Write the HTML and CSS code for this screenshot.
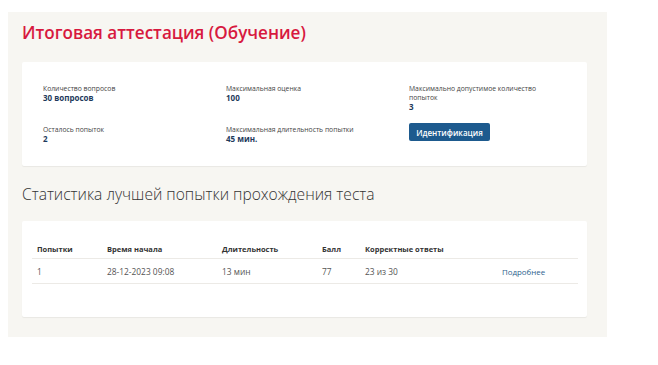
FILE: index.html
```html
<!DOCTYPE html>
<html lang="ru">
<head>
  <meta charset="UTF-8">
  <meta name="viewport" content="width=device-width, initial-scale=1.0">
  <title>Итоговая аттестация</title>
  <link rel="stylesheet" href="styles.css">
</head>
<body>
  <div class="panel">
    <h1 class="title">Итоговая аттестация (Обучение)</h1>

    <div class="card info">
      <div class="info-item">
        <div class="label">Количество вопросов</div>
        <div class="value">30 вопросов</div>
      </div>
      <div class="info-item">
        <div class="label">Максимальная оценка</div>
        <div class="value">100</div>
      </div>
      <div class="info-item narrow">
        <div class="label">Максимально допустимое количество попыток</div>
        <div class="value">3</div>
      </div>
      <div class="info-item">
        <div class="label">Осталось попыток</div>
        <div class="value">2</div>
      </div>
      <div class="info-item">
        <div class="label">Максимальная длительность попытки</div>
        <div class="value">45 мин.</div>
      </div>
      <div class="info-item">
        <button class="btn">Идентификация</button>
      </div>
    </div>

    <h2 class="subtitle">Статистика лучшей попытки прохождения теста</h2>

    <div class="card stats">
      <table class="results">
        <thead>
          <tr>
            <th class="c1">Попытки</th>
            <th class="c2">Время начала</th>
            <th class="c3">Длительность</th>
            <th class="c4">Балл</th>
            <th class="c5">Корректные ответы</th>
            <th></th>
          </tr>
        </thead>
        <tbody>
          <tr>
            <td>1</td>
            <td>28-12-2023 09:08</td>
            <td>13 мин</td>
            <td>77</td>
            <td>23 из 30</td>
            <td><a href="#">Подробнее</a></td>
          </tr>
        </tbody>
      </table>
    </div>
  </div>
</body>
</html>
```

FILE: styles.css
```css
body {
  margin: 0;
  padding: 12px 0 0 8px;
  background: #fff;
  font-family: "Open Sans", "Liberation Sans", sans-serif;
  color: #333;
}
.panel {
  width: 599px;
  height: 325px;
  padding: 0 20px 0 14px;
  box-sizing: border-box;
  background: #f7f6f2;
  overflow: hidden;
}
.title {
  margin: 0;
  padding-top: 9px;
  height: 50px;
  box-sizing: border-box;
  font-size: 17.1px;
  font-weight: 600;
  color: #d7193f;
}
.card {
  background: #fff;
  border-radius: 2px;
  box-shadow: 0 1px 1px rgba(0,0,0,0.06);
}
.info {
  height: 104px;
  box-sizing: border-box;
  padding: 22px 0 0 21px;
  display: grid;
  grid-template-columns: 183px 183px 183px;
  grid-template-rows: 41px 40px;
}
.info-item.narrow {
  max-width: 135px;
}
.label {
  font-size: 6.8px;
  line-height: 9px;
  color: #444;
}
.value {
  font-size: 8px;
  line-height: 10px;
  font-weight: 700;
  color: #1e3a5c;
}
.btn {
  display: block;
  margin-top: -2px;
  width: 81px;
  height: 18px;
  padding: 0;
  border: none;
  border-radius: 2px;
  background: #1d5a8e;
  color: #fff;
  font-family: inherit;
  font-size: 8px;
  font-weight: 600;
}
.subtitle {
  margin: 0;
  height: 55px;
  padding-top: 17px;
  box-sizing: border-box;
  font-size: 15.6px;
  font-weight: 300;
  color: #333;
}
.stats {
  height: 96px;
  box-sizing: border-box;
  padding: 18px 9px 0 10px;
}
.results {
  width: 100%;
  table-layout: fixed;
  border-collapse: collapse;
  font-size: 7.5px;
}
.results th {
  text-align: left;
  font-weight: 700;
  color: #333;
  height: 19px;
  padding: 0 0 0 5px;
  border-bottom: 1px solid #eceae6;
}
.results td {
  height: 24px;
  padding: 0 0 0 5px;
  font-size: 8.4px;
  color: #555;
  border-bottom: 1px solid #eceae6;
}
.c1 { width: 65px; }
.c2 { width: 110px; }
.c3 { width: 95px; }
.c4 { width: 38px; }
.c5 { width: 132px; }
.results a {
  font-size: 7.9px;
  color: #2d5f8e;
  text-decoration: none;
}
```
